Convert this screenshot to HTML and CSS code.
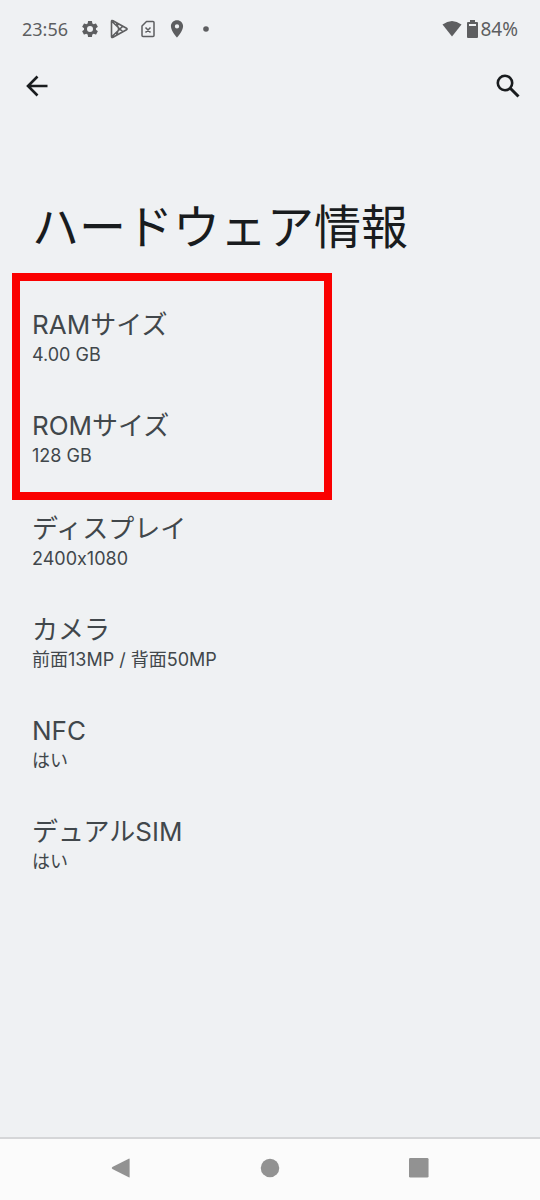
FILE: index.html
```html
<!DOCTYPE html>
<html lang="ja">
<head>
<meta charset="utf-8">
<meta name="viewport" content="width=device-width, initial-scale=1">
<title>ハードウェア情報</title>
<link rel="stylesheet" href="styles.css">
</head>
<body>
<div class="status-bar">
  <div class="status-left">
    <span class="clock">23:56</span>
    <svg class="status-icon" viewBox="0 0 24 24" fill="currentColor"><path fill-rule="evenodd" d="M19.14 12.94c.04-.3.06-.61.06-.94s-.02-.64-.07-.94l2.03-1.58c.18-.14.23-.41.12-.61l-1.92-3.32c-.12-.22-.37-.29-.59-.22l-2.39.96c-.5-.38-1.03-.7-1.62-.94L14.4 2.81c-.04-.24-.24-.41-.48-.41h-3.84c-.24 0-.43.17-.47.41l-.36 2.54c-.59.24-1.13.57-1.62.94l-2.39-.96c-.22-.08-.47 0-.59.22L2.74 8.87c-.12.21-.08.47.12.61l2.03 1.58c-.05.3-.09.63-.09.94s.02.64.07.94l-2.03 1.58c-.18.14-.23.41-.12.61l1.92 3.32c.12.22.37.29.59.22l2.39-.96c.5.38 1.03.7 1.62.94l.36 2.54c.05.24.24.41.48.41h3.84c.24 0 .44-.17.47-.41l.36-2.54c.59-.24 1.13-.56 1.62-.94l2.39.96c.22.08.47 0 .59-.22l1.92-3.32c.12-.22.07-.47-.12-.61zM12 15.6A3.6 3.6 0 1 1 12 8.4a3.6 3.6 0 0 1 0 7.2z"/></svg>
    <svg class="status-icon" viewBox="0 0 20 20" fill="none" stroke="currentColor" stroke-width="1.6" stroke-linejoin="round"><path d="M2.500 2.500v15q0 1.500 1.500.8l13.500-7.500q1.200-.8 0-1.600L4 1.700q-1.500-.7-1.500.8zM3 2.500 14 13M3 17.500 14 7M7.500 3.800 9.700 10l-2.200 6.200"/></svg>
    <svg class="status-icon" viewBox="0 0 20 20" fill="none" stroke="currentColor" stroke-width="1.5"><path d="M8.500 2.500H15q1 0 1 1v13q0 1-1 1H5q-1 0-1-1V7zM7.500 8.500l5 5M12.500 8.500l-5 5" stroke-linejoin="round"/></svg>
    <svg class="status-icon" viewBox="0 0 24 24" fill="currentColor"><path fill-rule="evenodd" d="M12 1.500c-4.200 0-7.300 3.200-7.300 7.300C4.700 14.300 12 22.500 12 22.500s7.300-8.200 7.300-13.700c0-4.100-3.100-7.300-7.300-7.300zm0 9.900a2.600 2.600 0 1 1 0-5.200 2.600 2.600 0 0 1 0 5.200z"/></svg>
    <svg class="status-icon" viewBox="0 0 20 20" fill="currentColor"><circle cx="10" cy="10" r="2.800"/></svg>
  </div>
  <div class="status-right">
    <svg class="wifi" viewBox="0 0 20 18" fill="currentColor"><path d="M.5 4.500Q10-2.500 19.500 4.500L10 16.500z"/></svg>
    <svg class="battery" viewBox="0 0 11 18"><path fill="currentColor" fill-rule="evenodd" d="M3 0h5v2h2q1 0 1 1v14q0 1-1 1H1q-1 0-1-1V3q0-1 1-1h2zM2 4v2h7V4z"/></svg>
    <span>84%</span>
  </div>
</div>
<header class="toolbar">
  <button class="icon-button" type="button" aria-label="戻る"><svg viewBox="0 0 24 24" fill="none" stroke="currentColor" stroke-width="2.6"><path d="M22.500 12H3M12.500 2.500 3 12l9.500 9.500"/></svg></button>
  <button class="icon-button" type="button" aria-label="検索"><svg viewBox="0 0 24 24" fill="none" stroke="currentColor" stroke-width="2.6"><circle cx="9" cy="9" r="7.200"/><path d="m14 14 8.500 8.500" stroke-width="3"/></svg></button>
</header>
<main>
  <h1 class="title">ハードウェア情報</h1>
  <dl class="specs highlighted">
    <div class="spec"><dt>RAMサイズ</dt><dd>4.00 GB</dd></div>
    <div class="spec"><dt>ROMサイズ</dt><dd>128 GB</dd></div>
  </dl>
  <dl class="specs">
    <div class="spec"><dt>ディスプレイ</dt><dd>2400x1080</dd></div>
    <div class="spec"><dt>カメラ</dt><dd>前面13MP / 背面50MP</dd></div>
    <div class="spec"><dt>NFC</dt><dd>はい</dd></div>
    <div class="spec"><dt>デュアルSIM</dt><dd>はい</dd></div>
  </dl>
</main>
<nav class="nav-bar">
  <button class="nav-button" type="button" aria-label="戻る"><svg viewBox="0 0 22 22" fill="currentColor"><path d="M20.500 1.200v19.600q0 1-1 .5L1.500 12q-1.500-1 0-2L19.500.7q1-.5 1 .5z"/></svg></button>
  <button class="nav-button" type="button" aria-label="ホーム"><svg viewBox="0 0 22 22" fill="currentColor"><circle cx="11" cy="11" r="10.200"/></svg></button>
  <button class="nav-button" type="button" aria-label="最近のアプリ"><svg viewBox="0 0 22 22" fill="currentColor"><rect x="0" y="0" width="21.500" height="21.500" rx="1.500"/></svg></button>
</nav>
</body>
</html>
```
FILE: styles.css
```css
* { box-sizing: border-box; }

body {
  display: flex;
  flex-direction: column;
  min-height: 100vh;
  margin: 0;
  background: #eff1f3;
  color: #41474b;
  font-family: Inter, "Noto Sans CJK JP", sans-serif;
  font-feature-settings: "calt" 0;
}

svg { display: block; }

.status-bar {
  display: flex;
  justify-content: space-between;
  align-items: center;
  height: 58px;
  padding: 0 22px;
  color: #5d5e60;
  font-family: "Noto Sans", sans-serif;
  font-size: 18px;
}

.status-left { display: flex; align-items: center; gap: 9px; }
.clock { margin-right: 3px; }
.status-icon { width: 20px; height: 20px; }
.status-right { display: flex; align-items: center; gap: 2px; font-size: 19px; }
.wifi { width: 20px; height: 18px; margin-right: 3px; }
.battery { width: 11px; height: 18px; }

.toolbar {
  display: flex;
  justify-content: space-between;
  height: 56px;
  padding: 0 4px 0 9px;
}

.icon-button {
  display: grid;
  place-items: center;
  width: 56px;
  height: 56px;
  padding: 0;
  border: 0;
  background: none;
  color: #191c1e;
}
.icon-button svg { width: 24px; height: 24px; }

main { flex: 1; }

.title {
  margin: 78px 32px 25px;
  color: #191c1e;
  font-size: 47px;
  font-weight: 400;
  line-height: 70px;
}

.specs { margin: 0 0 3px; }
.spec { padding: 20px 32px; }
.spec + .spec { padding-top: 21px; }
.spec dt { font-size: 26px; line-height: 36px; }
.spec dd { margin: 0; font-size: 18px; line-height: 24px; }

.highlighted { position: relative; }
.highlighted::after {
  content: "";
  box-sizing: border-box;
  position: absolute;
  top: -14px;
  bottom: -12px;
  left: 12px;
  width: 320px;
  border: 8px solid #fa0000;
}

.nav-bar {
  display: flex;
  height: 63px;
  padding: 0 46px 3px;
  border-top: 2px solid #d5d6d8;
  background: #fbfbfb;
}
.nav-button {
  display: grid;
  flex: 1;
  place-items: center;
  padding: 0;
  border: 0;
  background: none;
  color: #929292;
}
.nav-button svg { width: 20px; height: 20px; }
```
